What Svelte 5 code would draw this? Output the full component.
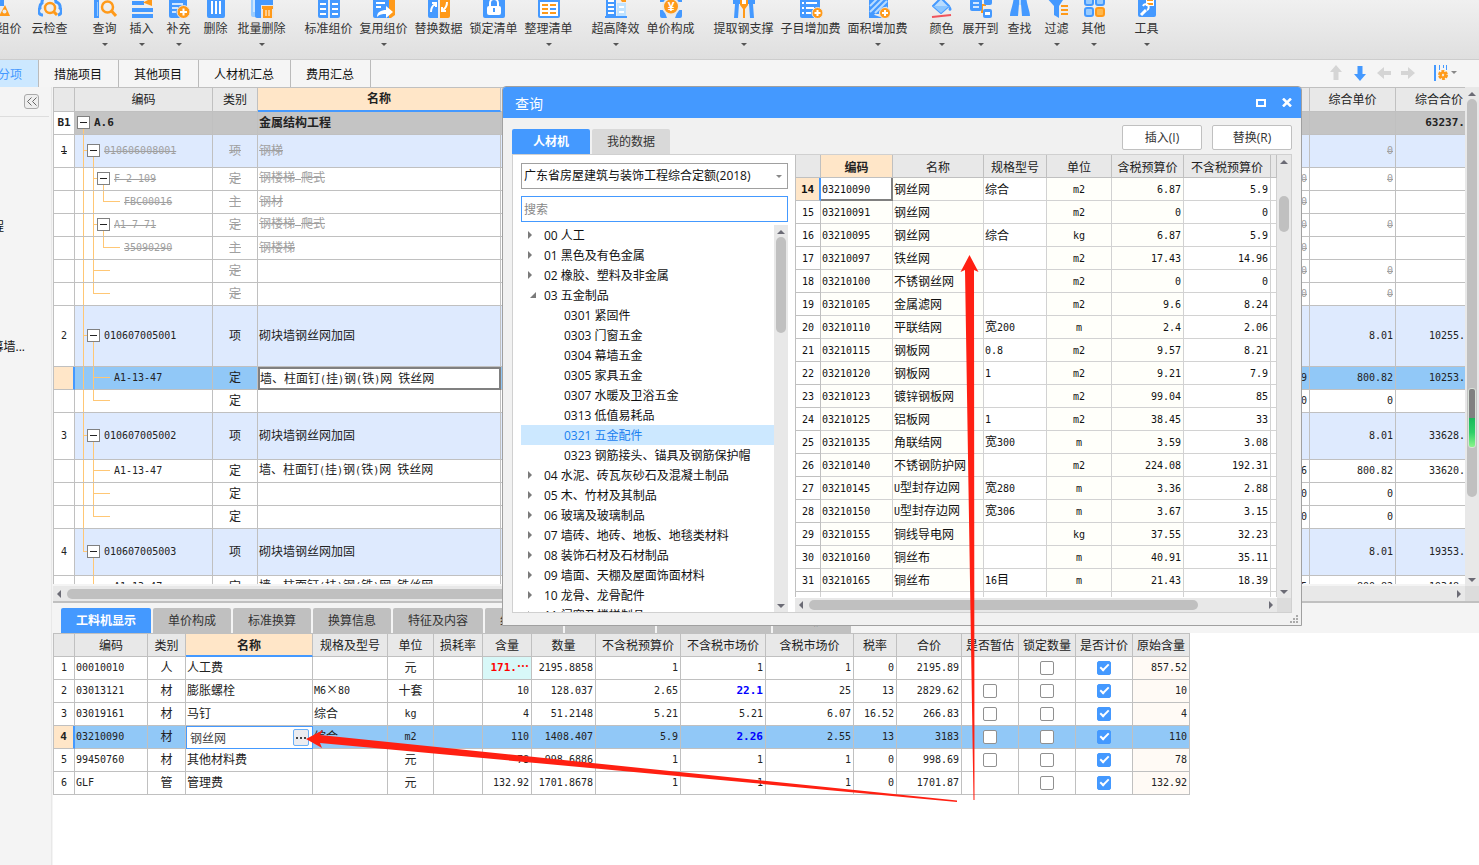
<script>
  // Ribbon icons are drawn on a 24x24 grid, blue #4499ff and orange #ff9a1a
  const icons = {
    smart:
      '<path d="M14 6h4v6h-4z" fill="#49f"/><path d="M19 11l5 11H13z" fill="#ff9a1a"/><circle cx="18.500" cy="17.500" r="2" fill="#eee"/>',
    cloud:
      '<path d="M5 21H4a4 4 0 0 1-2-7 5 5 0 0 1 2-5 7 7 0 0 1 14-1 5 5 0 0 1 4 6 4 4 0 0 1-2 7" fill="none" stroke="#49f" stroke-width="3"/><circle cx="12" cy="14" r="5" fill="none" stroke="#ff9a1a" stroke-width="2.500"/><path d="M16 18l3 3" stroke="#ff9a1a" stroke-width="3"/>',
    query:
      '<path d="M1 2h5v22H1z" fill="#49f"/><path d="M4 8h1v14H4z" fill="#9cf"/><path d="M8 2h12v4H8z" fill="#49f"/><circle cx="14.500" cy="13" r="5.500" fill="none" stroke="#ff9a1a" stroke-width="2.500"/><path d="M18.500 17l4.500 5" stroke="#ff9a1a" stroke-width="3"/>',
    insert:
      '<path d="M2 7h12v4H2zM2 14h21v4H2zM2 20h21v4H2z" fill="#49f"/><path d="M13 8.500L22 4v8z" fill="#ff9a1a"/>',
    add:
      '<path d="M2 2h18v22H4a2 2 0 0 1-2-2z" fill="#49f"/><path d="M5 10h11M5 14h6M5 18h4" stroke="#fff" stroke-width="1.500"/><circle cx="16.500" cy="18" r="6.500" fill="#ff9a1a" stroke="#e9e9e9" stroke-width="1"/><path d="M16.500 14.500v7M13 18h7" stroke="#fff" stroke-width="2"/>',
    remove:
      '<path d="M1 2h22v3H1zM3 6h18v16a2 2 0 0 1-2 2H5a2 2 0 0 1-2-2z" fill="#49f"/><path d="M8 7v13M12 7v13M16 7v13" stroke="#fff" stroke-width="2"/>',
    batch:
      '<path d="M1 3h15v20H3a2 2 0 0 1-2-2z" fill="#9cf"/><path d="M5 3h18v21H7a2 2 0 0 1-2-2z" fill="#49f"/><path d="M4 6v12" stroke="#cce6ff" stroke-width="2"/><path d="M11 11h13v14H11z" fill="#e8e8e8"/><path d="M12 12h11v3H12zM13 15h9v9h-9z" fill="#ff9a1a"/><path d="M16 16v6M19 16v6" stroke="#fff" stroke-width="1"/>',
    standard:
      '<path d="M1 2h10v22H3a2 2 0 0 1-2-2zM13 2h10v20a2 2 0 0 1-2 2h-8z" fill="#49f"/><path d="M3 10h6M3 15h6M3 20h6M15 10h6M15 15h6M15 20h6" stroke="#fff" stroke-width="2"/>',
    reuse:
      '<path d="M8 2h13a2 2 0 0 1 2 2v17l-4 3h-8z" fill="#ff9a1a"/><path d="M1 2h16v22H3a2 2 0 0 1-2-2z" fill="#49f"/><path d="M4 9h9M4 13h5" stroke="#fff" stroke-width="2"/><path d="M5 23c0-5 4-7 9-7v-4l7 6-7 6v-4c-4 0-6 0-9 3z" fill="#fff"/>',
    replace:
      '<path d="M1 4h10v20H3a2 2 0 0 1-2-2z" fill="#49f"/><path d="M13 4h10v18a2 2 0 0 1-2 2h-8z" fill="#ff9a1a"/><path d="M4 18c0-4 1-6 4-8M5 9h4v4M20 8c0 4-1 6-4 8M15 13v4h4" fill="none" stroke="#fff" stroke-width="2"/>',
    lock:
      '<rect x="1" y="2" width="22" height="22" rx="2" fill="#49f"/><path d="M8 13V9a4 4 0 0 1 8 0v4" fill="none" stroke="#fff" stroke-width="2"/><rect x="5" y="12" width="14" height="9" rx="2" fill="#fff"/><path d="M12 14v4" stroke="#49f" stroke-width="2"/>',
    arrange:
      '<rect x="2" y="2" width="20" height="21" rx="1" fill="#fff" stroke="#49f" stroke-width="2"/><path d="M3 3h18v5H3z" fill="#49f"/><path d="M5 11h6M5 15h6M5 19h6M13 11h6M13 15h6M13 19h6" stroke="#ff9a1a" stroke-width="2"/><path d="M13 15h6" stroke="#49f" stroke-width="2"/>',
    height:
      '<path d="M2 2h10v20H2z" fill="#49f"/><path d="M4 7h6M4 11h6M4 15h6M4 19h6" stroke="#fff" stroke-width="2"/><path d="M13 9h9v13h-9z" fill="#bfe2ff"/><path d="M15 13h5M15 18h5" stroke="#fff" stroke-width="2"/><path d="M1 22h22v2H1z" fill="#49f"/><path d="M14 2h8v6h-4z" fill="#ff9a1a"/>',
    price:
      '<path d="M1 3h22v5H1zM1 16h4l3 8H3a2 2 0 0 1-2-2zM23 16h-4l-3 8h5a2 2 0 0 0 2-2z" fill="#49f"/><circle cx="12" cy="12.500" r="8" fill="#ff9a1a" stroke="#e9e9e9" stroke-width="2"/><text x="12" y="17" font-size="12" font-weight="700" font-family="Liberation Sans, sans-serif" text-anchor="middle" fill="#fff">¥</text>',
    steel:
      '<path d="M1 6h22v4H1zM3 10h4l-1 14H2zM17 10h4l1 14h-4z" fill="#49f"/><path d="M8 4h8v7l-3 4v9h-2v-9l-3-4z" fill="#ff9a1a"/><path d="M10 6h4v4h-4z" fill="#fff"/>',
    subfee:
      '<path d="M1 2h20v22H3a2 2 0 0 1-2-2z" fill="#49f"/><path d="M3 9h2M3 14h2M3 19h2M7 9h11M7 14h8M7 19h5" stroke="#fff" stroke-width="2"/><circle cx="18.500" cy="19" r="5.500" fill="#ff9a1a" stroke="#e9e9e9" stroke-width="1"/><path d="M18.500 16v6M15.500 19h6" stroke="#fff" stroke-width="2"/>',
    areafee:
      '<path d="M3 2h19v18H3z" fill="#49f"/><path d="M4 12l9-9M4 18L19 3M9 19L21 7M14 20l7-7" stroke="#b8dcff" stroke-width="2"/><path d="M3 19v5h14M3 24l6-4H3z" fill="#49f"/><circle cx="19" cy="19" r="5.500" fill="#ff9a1a" stroke="#e9e9e9" stroke-width="1"/><path d="M19 16v6M16 19h6" stroke="#fff" stroke-width="2"/>',
    color:
      '<path d="M11 4l8 8-8 7-8-7z" fill="#b8dcff" stroke="#49f" stroke-width="2" stroke-linejoin="round"/><path d="M3 12h16l-8 7z" fill="#8cc6ff"/><path d="M20 12c2 3 2 4 0 5-2-1-2-2 0-5z" fill="#49f"/><path d="M2 23l19-2" stroke="#f0545c" stroke-width="2"/>',
    expand:
      '<path d="M13 11h4M17 18h-4v-7" fill="none" stroke="#ff9a1a" stroke-width="2"/><rect x="1" y="5" width="12" height="12" rx="2" fill="#49f"/><path d="M4 9h6M4 13h6" stroke="#fff" stroke-width="1.500"/><rect x="15" y="4" width="8" height="7" rx="2" fill="#49f"/><rect x="14" y="15" width="9" height="9" rx="2" fill="#49f"/><path d="M16 18h5v3h-5z" fill="#fff"/>',
    find:
      '<path d="M6 2h5v8l-1 12H2c0-5 3-10 4-20zM13 2h5c1 10 4 15 4 20h-8l-1-12z" fill="#49f"/><path d="M11 5h2v6h-2z" fill="#b8dcff"/>',
    filter:
      '<path d="M1 3h19l-6 9v12l-5-3v-9z" fill="#49f"/><path d="M16 12h7M16 16h7M16 20h7" stroke="#ff9a1a" stroke-width="2"/>',
    other:
      '<g fill="#9cf" stroke="#49f" stroke-width="2"><rect x="3" y="3" width="8" height="8" rx="2"/><rect x="14" y="3" width="8" height="8" rx="2"/><rect x="3" y="14" width="8" height="8" rx="2"/></g><rect x="14" y="14" width="8" height="8" rx="2" fill="#ffb84d" stroke="#ff9a1a" stroke-width="2"/>',
    tools:
      '<rect x="3" y="2" width="18" height="21" rx="2" fill="#49f"/><path d="M11 4h8v8h-8z" fill="#fff"/><path d="M12 6h6M12 10h6" stroke="#ff9a1a" stroke-width="2"/><path d="M6 21l5-5" stroke="#fff" stroke-width="3"/><path d="M8 12a3 3 0 1 1 4 4" fill="none" stroke="#fff" stroke-width="2"/>',
  };

  const ribbon = [
    { gap: "none", items: [["智能组价", "smart"]] },
    { gap: "small", items: [["云检查", "cloud"]] },
    {
      gap: "large",
      items: [
        ["查询", "query", true],
        ["插入", "insert", true],
        ["补充", "add", true],
        ["删除", "remove"],
        ["批量删除", "batch", true],
      ],
    },
    {
      gap: "medium",
      items: [
        ["标准组价", "standard"],
        ["复用组价", "reuse", true],
        ["替换数据", "replace"],
        ["锁定清单", "lock"],
        ["整理清单", "arrange", true],
      ],
    },
    {
      gap: "medium",
      items: [
        ["超高降效", "height", true],
        ["单价构成", "price"],
      ],
    },
    {
      gap: "medium",
      items: [
        ["提取钢支撑", "steel", true],
        ["子目增加费", "subfee"],
        ["面积增加费", "areafee", true],
      ],
    },
    {
      gap: "medium",
      items: [
        ["颜色", "color", true],
        ["展开到", "expand", true],
        ["查找", "find"],
        ["过滤", "filter", true],
        ["其他", "other", true],
      ],
    },
    { gap: "large", items: [["工具", "tools", true]] },
  ];

  const pages = ["分部分项", "措施项目", "其他项目", "人材机汇总", "费用汇总"];

  // depth: tree level, box: has children, last: last child, through: levels whose line runs past
  const bills = [
    { no: "B1", code: "A.6", kind: "", name: "金属结构工程", sum: "63237.", h: 23, tone: "root", depth: 0, box: true },
    { no: "1", code: "010606008001", kind: "项", name: "钢梯", price: "0", h: 33, tone: "item", depth: 1, box: true, dead: true },
    { code: "F-2-109", kind: "定", name: "钢楼梯 爬式", qty: "0", price: "0", h: 23, depth: 2, box: true, through: [0], dead: true },
    { code: "FBC00016", kind: "主", name: "钢材", qty: "0", h: 23, depth: 3, last: true, through: [0, 1], dead: true },
    { code: "A1-7-71", kind: "定", name: "钢楼梯 爬式", qty: "0", price: "0", h: 23, depth: 2, box: true, through: [0], dead: true },
    { code: "35090290", kind: "主", name: "钢楼梯", qty: "0", h: 23, depth: 3, last: true, through: [0, 1], dead: true },
    { code: "", kind: "定", name: "", qty: "0", price: "0", h: 23, depth: 2, through: [0], dead: true },
    { code: "", kind: "定", name: "", qty: "0", price: "0", h: 23, depth: 2, last: true, through: [0], dead: true },
    { no: "2", code: "010607005001", kind: "项", name: "砌块墙钢丝网加固", price: "8.01", sum: "10255.", h: 61, tone: "item", depth: 1, box: true },
    { code: "A1-13-47", kind: "定", name: "墙、柱面钉(挂)钢(铁)网 铁丝网", qty: "9", price: "800.82", sum: "10253.", h: 23, tone: "current", depth: 2, through: [0] },
    { code: "", kind: "定", name: "", qty: "0", price: "0", h: 23, depth: 2, last: true, through: [0] },
    { no: "3", code: "010607005002", kind: "项", name: "砌块墙钢丝网加固", price: "8.01", sum: "33628.", h: 47, tone: "item", depth: 1, box: true },
    { code: "A1-13-47", kind: "定", name: "墙、柱面钉(挂)钢(铁)网 铁丝网", qty: "6", price: "800.82", sum: "33620.", h: 23, depth: 2, through: [0] },
    { code: "", kind: "定", name: "", qty: "0", price: "0", h: 23, depth: 2, through: [0] },
    { code: "", kind: "定", name: "", qty: "0", price: "0", h: 23, depth: 2, last: true, through: [0] },
    { no: "4", code: "010607005003", kind: "项", name: "砌块墙钢丝网加固", price: "8.01", sum: "19353.", h: 47, tone: "item", depth: 1, box: true, last: true },
    { code: "A1-13-47", kind: "定", name: "墙、柱面钉(挂)钢(铁)网 铁丝网", qty: "5", price: "800.82", sum: "19348.", h: 23, depth: 2 },
  ];

  const details = ["工料机显示", "单价构成", "标准换算", "换算信息", "特征及内容", "组价方案", "工程量明细", "反查图形工程量", "说明信息"];

  const resourceCols = [
    ["", 21], ["编码", 73], ["类别", 38], ["名称", 127], ["规格及型号", 75], ["单位", 46],
    ["损耗率", 49], ["含量", 49], ["数量", 64], ["不含税预算价", 85], ["不含税市场价", 85],
    ["含税市场价", 88], ["税率", 43], ["合价", 65], ["是否暂估", 57], ["锁定数量", 57],
    ["是否计价", 57], ["原始含量", 57],
  ];

  const resources = [
    { code: "00010010", kind: "人", name: "人工费", spec: "", unit: "元", use: "171.⋯", qty: "2195.8858", budget: "1", market: "1", taxed: "1", rate: "0", total: "2195.89", origin: "857.52", warn: true },
    { code: "03013121", kind: "材", name: "膨胀螺栓", spec: "M6×80", unit: "十套", use: "10", qty: "128.037", budget: "2.65", market: "22.1", taxed: "25", rate: "13", total: "2829.62", origin: "10", est: true, changed: true },
    { code: "03019161", kind: "材", name: "马钉", spec: "综合", unit: "kg", use: "4", qty: "51.2148", budget: "5.21", market: "5.21", taxed: "6.07", rate: "16.52", total: "266.83", origin: "4", est: true },
    { code: "03210090", kind: "材", name: "钢丝网", spec: "综合", unit: "m2", use: "110", qty: "1408.407", budget: "5.9", market: "2.26", taxed: "2.55", rate: "13", total: "3183", origin: "110", est: true, changed: true, current: true },
    { code: "99450760", kind: "材", name: "其他材料费", spec: "", unit: "元", use: "78", qty: "998.6886", budget: "1", market: "1", taxed: "1", rate: "0", total: "998.69", origin: "78", est: true },
    { code: "GLF", kind: "管", name: "管理费", spec: "", unit: "元", use: "132.92", qty: "1701.8678", budget: "1", market: "1", taxed: "1", rate: "0", total: "1701.87", origin: "132.92" },
  ];

  const catalog = [
    ["00 人工"],
    ["01 黑色及有色金属"],
    ["02 橡胶、塑料及非金属"],
    ["03 五金制品", "open"],
    ["0301 紧固件", "leaf"],
    ["0303 门窗五金", "leaf"],
    ["0304 幕墙五金", "leaf"],
    ["0305 家具五金", "leaf"],
    ["0307 水暖及卫浴五金", "leaf"],
    ["0313 低值易耗品", "leaf"],
    ["0321 五金配件", "leaf"],
    ["0323 钢筋接头、锚具及钢筋保护帽", "leaf"],
    ["04 水泥、砖瓦灰砂石及混凝土制品"],
    ["05 木、竹材及其制品"],
    ["06 玻璃及玻璃制品"],
    ["07 墙砖、地砖、地板、地毯类材料"],
    ["08 装饰石材及石材制品"],
    ["09 墙面、天棚及屋面饰面材料"],
    ["10 龙骨、龙骨配件"],
    ["11 门窗及楼梯制品"],
  ];

  const materialCols = [
    ["", 25], ["编码", 72], ["名称", 91], ["规格型号", 63], ["单位", 65], ["含税预算价", 72], ["不含税预算价", 87],
  ];

  const materials = [
    ["03210090", "钢丝网", "综合", "m2", "6.87", "5.9"],
    ["03210091", "钢丝网", "", "m2", "0", "0"],
    ["03210095", "钢丝网", "综合", "kg", "6.87", "5.9"],
    ["03210097", "铁丝网", "", "m2", "17.43", "14.96"],
    ["03210100", "不锈钢丝网", "", "m2", "0", "0"],
    ["03210105", "金属滤网", "", "m2", "9.6", "8.24"],
    ["03210110", "平联结网", "宽200", "m", "2.4", "2.06"],
    ["03210115", "钢板网", "0.8", "m2", "9.57", "8.21"],
    ["03210120", "钢板网", "1", "m2", "9.21", "7.9"],
    ["03210123", "镀锌钢板网", "", "m2", "99.04", "85"],
    ["03210125", "铝板网", "1", "m2", "38.45", "33"],
    ["03210135", "角联结网", "宽300", "m", "3.59", "3.08"],
    ["03210140", "不锈钢防护网", "", "m2", "224.08", "192.31"],
    ["03210145", "U型封存边网", "宽280", "m", "3.36", "2.88"],
    ["03210150", "U型封存边网", "宽306", "m", "3.67", "3.15"],
    ["03210155", "铜线导电网", "", "kg", "37.55", "32.23"],
    ["03210160", "铜丝布", "", "m", "40.91", "35.11"],
    ["03210165", "铜丝布", "16目", "m", "21.43", "18.39"],
  ];

  // Latin runs are set in a half-width face beside the full-width characters
  function runs(text) {
    return (text || "").split(/([\x20-\x7e]+)/).filter((part) => part !== "");
  }

  // Connector lines of one tree row, x = 8 + 10 * level
  function guides(row) {
    const mid = Math.floor(row.h / 2);
    let d = "";
    for (const level of row.through || []) {
      d += `M${8 + 10 * level}.5 0V${row.h}`;
    }
    if (row.depth > 0) {
      const x = 8 + 10 * (row.depth - 1);
      d += `M${x}.5 0V${row.last ? mid : row.h}M${x} ${mid - 0.5}h${row.box ? 10 : 17}`;
    }
    if (row.box) {
      d += `M${8 + 10 * row.depth}.5 ${mid}V${row.h}`;
    }
    return d;
  }
</script>

{#snippet mixed(text)}
  {#each runs(text) as part}{#if /^[\x20-\x7e]/.test(part)}<span class="half">{part}</span>{:else}{part}{/if}{/each}
{/snippet}

{#snippet branch(row)}
  {@const mid = Math.floor(row.h / 2)}
  <svg width={19 + 10 * row.depth} height={row.h - 1}>
    <path d={guides(row)} fill="none" stroke="#ffc775" />
    {#if row.box}
      <rect x={2.5 + 10 * row.depth} y={mid - 6.5} width="12" height="12" fill="#fff" stroke="#808080" />
      <path d="M{5 + 10 * row.depth} {mid - 0.5}h7" stroke="#222" />
    {/if}
  </svg>
{/snippet}

<div class="app">
  <header class="ribbon">
    {#each ribbon as group}
      <div class="group {group.gap}">
        {#each group.items as [label, icon, menu]}
          <button class="tool chars-{label.length}">
            <svg width="24" height="24" viewBox="0 0 24 24">{@html icons[icon]}</svg>
            <span>{label}</span>
            {#if menu}<i class="caret"></i>{/if}
          </button>
        {/each}
      </div>
    {/each}
  </header>

  <nav class="pages">
    {#each pages as page, i}
      <button class:active={i === 0}>{page}</button>
    {/each}
    <div class="moves">
      <button aria-label="上移"><svg width="14" height="16"><path d="M7 0l6 7H9.500v8h-5V7H1z" fill="#d5d5d5" /></svg></button>
      <button aria-label="下移"><svg width="14" height="16"><path d="M7 16l6-7H9.500V1h-5v8H1z" fill="#49f" /></svg></button>
      <button aria-label="左移"><svg width="14" height="14"><path d="M0 7l7-6v4h7v4H7v4z" fill="#d5d5d5" /></svg></button>
      <button aria-label="右移"><svg width="14" height="14"><path d="M14 7L7 1v4H0v4h7v4z" fill="#d5d5d5" /></svg></button>
      <button class="columns" aria-label="列设置">
        <svg width="14" height="16">
          <path d="M1 0v16" stroke="#49f" stroke-width="2" />
          <path d="M5.500 0v5M9.500 0v3M12.500 0v5" stroke="#49f" />
          <circle cx="9" cy="10" r="3" fill="none" stroke="#ff9a1a" stroke-width="4" stroke-dasharray="2.200 0.940" />
          <circle cx="9" cy="10" r="2.500" fill="none" stroke="#ff9a1a" stroke-width="2" />
        </svg>
        <i class="caret light"></i>
      </button>
    </div>
  </nav>

  <div class="body">
    <aside class="side">
      <div class="side-head">
        <button aria-label="收起">
          <svg width="10" height="9"><path d="M4.500 0.500l-4 4 4 4M9.500 0.500l-4 4 4 4" fill="none" stroke="#666" /></svg>
        </button>
      </div>
      <p class="first">单位工程</p>
      <p class="second">幕墙...</p>
    </aside>

    <main>
      <section class="bills">
        <div class="grid-clip">
          <table>
            <colgroup>
              <col class="w-no" /><col class="w-code" /><col class="w-kind" /><col class="w-name" />
              <col /><col class="w-price" /><col class="w-sum" />
            </colgroup>
            <thead>
              <tr>
                <th></th><th>编码</th><th>类别</th><th class="sorted">名称</th><th></th><th>综合单价</th>
                <th class="cut">综合合价</th>
              </tr>
            </thead>
            <tbody>
              {#each bills as row}
                <tr class={row.tone} class:dead={row.dead} style="height: {row.h}px">
                  <td class="no">{@render mixed(row.no)}</td>
                  <td class="code">
                    <div>
                      {#if row.box}
                        <button class="twisty" aria-label="折叠">{@render branch(row)}</button>
                      {:else}
                        {@render branch(row)}
                      {/if}
                      <span class="text">{@render mixed(row.code)}</span>
                    </div>
                  </td>
                  <td class="mid">{row.kind}</td>
                  <td class="name">{@render mixed(row.name)}</td>
                  <td class="num">{@render mixed(row.qty)}</td>
                  <td class="num">{@render mixed(row.price)}</td>
                  <td class="num cut">{@render mixed(row.sum)}</td>
                </tr>
              {/each}
            </tbody>
          </table>
        </div>
        <div class="vbar tall"><i class="up"></i><b></b><i class="down"></i></div>
        <div class="hbar wide"><i class="left"></i><b></b><i class="right"></i></div>
        <div class="corner"></div>
        <div class="meter"></div>
      </section>

      <section class="resources">
        <div class="detail-tabs">
          {#each details as tab, i}
            <button class:active={i === 0}>{tab}</button>
          {/each}
        </div>
        <div class="sheet">
          <table>
            <colgroup>
              {#each resourceCols as [, width]}<col style="width: {width}px" />{/each}
            </colgroup>
            <thead>
              <tr>
                {#each resourceCols as [title]}<th class:sorted={title === "名称"}>{title}</th>{/each}
              </tr>
            </thead>
            <tbody>
              {#each resources as row, i}
                <tr class:current={row.current}>
                  <td class="no">{@render mixed(String(i + 1))}</td>
                  <td>{@render mixed(row.code)}</td>
                  <td class="mid">{row.kind}</td>
                  {#if row.current}
                    <td class="editing">
                      <div>
                        <input type="text" aria-label="名称" value={row.name} />
                        <button aria-label="查询"><i></i><i></i><i></i></button>
                      </div>
                    </td>
                  {:else}
                    <td>{row.name}</td>
                  {/if}
                  <td>{@render mixed(row.spec)}</td>
                  <td class="mid">{@render mixed(row.unit)}</td>
                  <td></td>
                  <td class="num" class:warn={row.warn}>{@render mixed(row.use)}</td>
                  <td class="num">{@render mixed(row.qty)}</td>
                  <td class="num">{@render mixed(row.budget)}</td>
                  <td class="num" class:changed={row.changed}>{@render mixed(row.market)}</td>
                  <td class="num">{@render mixed(row.taxed)}</td>
                  <td class="num">{@render mixed(row.rate)}</td>
                  <td class="num">{@render mixed(row.total)}</td>
                  <td class="check">{#if row.est}<input type="checkbox" aria-label="是否暂估" />{/if}</td>
                  <td class="check"><input type="checkbox" aria-label="锁定数量" /></td>
                  <td class="check"><input type="checkbox" aria-label="是否计价" checked /></td>
                  <td class="num origin">{@render mixed(row.origin)}</td>
                </tr>
              {/each}
            </tbody>
          </table>
        </div>
      </section>
    </main>
  </div>

  <div class="dialog" role="dialog" aria-label="查询">
    <div class="title">
      <h1>查询</h1>
      <button aria-label="最大化"><svg width="10" height="8"><rect x="1" y="1" width="8" height="6" fill="none" stroke="#fff" stroke-width="2" /></svg></button>
      <button aria-label="关闭"><svg width="10" height="9"><path d="M1 0.500l8 8M9 0.500l-8 8" stroke="#fff" stroke-width="2.500" /></svg></button>
    </div>
    <div class="dialog-head">
      <div class="dialog-tabs">
        <button class="active">人材机</button>
        <button>我的数据</button>
      </div>
      <button class="action">插入(I)</button>
      <button class="action">替换(R)</button>
    </div>
    <div class="pane">
      <div class="finder">
        <div class="choose">
          <select aria-label="定额库"><option>广东省房屋建筑与装饰工程综合定额(2018)</option></select>
          <i class="caret light"></i>
        </div>
        <input type="text" placeholder="搜索" aria-label="搜索" />
        <div class="catalog">
          <ul>
            {#each catalog as [label, state]}
              <li class={state} class:picked={label.startsWith("0321")}>
                {#if state === "open"}
                  <svg width="6" height="6"><path d="M8 0v6H2z" fill="#7a7a7a" /></svg>
                {:else if state !== "leaf"}
                  <svg width="5" height="8"><path d="M0 0l4 4-4 4z" fill="#7a7a7a" /></svg>
                {/if}
                <span>{label}</span>
              </li>
            {/each}
          </ul>
          <div class="vbar"><i class="up"></i><b></b><i class="down"></i></div>
        </div>
      </div>
      <div class="materials">
        <div class="grid-clip">
          <table>
            <colgroup>
              {#each materialCols as [, width]}<col style="width: {width}px" />{/each}
              <col />
            </colgroup>
            <thead>
              <tr>
                {#each materialCols as [title], i}<th class:sorted={i === 1}>{title}</th>{/each}
                <th></th>
              </tr>
            </thead>
            <tbody>
              {#each materials as row, i}
                <tr class:first={i === 0}>
                  <td class="no">{@render mixed(String(i + 14))}</td>
                  <td class="key">{@render mixed(row[0])}</td>
                  <td class="ivory">{@render mixed(row[1])}</td>
                  <td>{@render mixed(row[2])}</td>
                  <td class="mid ivory">{@render mixed(row[3])}</td>
                  <td class="num ivory">{@render mixed(row[4])}</td>
                  <td class="num">{@render mixed(row[5])}</td>
                  <td></td>
                </tr>
              {/each}
              <tr><td></td><td></td><td></td><td></td><td></td><td></td><td></td><td></td></tr>
            </tbody>
          </table>
        </div>
        <div class="vbar"><i class="up"></i><b></b><i class="down"></i></div>
        <div class="hbar"><i class="left"></i><b></b><i class="right"></i></div>
        <div class="corner"></div>
      </div>
    </div>
    <svg class="grip" width="8" height="8" fill="#aaa"><path d="M6 0h2v2H6zM3 3h2v2H3zM6 3h2v2H6zM0 6h2v2H0zM3 6h2v2H3zM6 6h2v2H6z" /></svg>
  </div>

  <svg class="marks" width="1000" height="820" fill="#ff2012">
    <path d="M969.500 255l9 17-4.500-2L974.500 800h-1L965 270l-4.500 2z" />
    <path d="M306 739l17-9-3 5 637 65.500v1.500L320 743l2 5z" />
  </svg>
</div>

<style>
  :global(body) {
    margin: 0;
  }
  .app {
    position: relative;
    display: flex;
    flex-direction: column;
    height: 100vh;
    overflow: hidden;
    background: #f4f4f4;
    color: #222;
    font: 12px/16px "Open Sans", "Noto Sans CJK SC", sans-serif;
  }
  button,
  input,
  select {
    margin: 0;
    padding: 0;
    border: 0;
    background: none;
    color: inherit;
    font: inherit;
  }
  svg {
    display: block;
    flex: none;
  }

  /* ribbon */
  .ribbon {
    display: flex;
    flex: none;
    height: 59px;
    overflow: hidden;
    border-bottom: 1px solid #cdcdcd;
    background: linear-gradient(#f0f0f0, #dfdfdf);
  }
  .group {
    display: flex;
    align-items: flex-start;
    margin-top: -6px;
  }
  .group.none {
    margin-left: -30px;
  }
  .group.small {
    margin-left: 4px;
  }
  .group.medium {
    margin-left: 12px;
  }
  .group.large {
    margin-left: 16px;
  }
  .tool {
    display: flex;
    flex-direction: column;
    align-items: center;
    color: #333;
    white-space: nowrap;
  }
  .tool span {
    margin-top: 2px;
    line-height: 18px;
  }
  .tool .caret {
    margin-top: 5px;
  }
  .chars-2 {
    width: 37px;
  }
  .chars-3 {
    width: 41px;
  }
  .chars-4 {
    width: 55px;
  }
  .chars-5 {
    width: 67px;
  }
  .caret {
    border: 3px solid transparent;
    border-top-color: #555;
    border-bottom: 0;
  }
  .caret.light {
    border-top-color: #888;
  }

  /* page tabs */
  .pages {
    display: flex;
    flex: none;
    height: 27px;
    margin-left: -41px;
    background: #f5f5f5;
    color: #111;
  }
  .pages > button {
    padding: 2px 16px 0 15px;
    border-right: 1px solid #bbb;
  }
  .pages > button.active {
    background: #cce8ff;
    color: #49f;
  }
  .moves {
    display: flex;
    align-items: center;
    gap: 10px;
    margin-left: auto;
    padding: 0 22px 2px 0;
  }
  .moves .columns {
    display: flex;
    align-items: center;
    gap: 3px;
    margin-left: 9px;
  }

  .body {
    display: flex;
    flex: 1;
    min-height: 0;
  }
  .side {
    flex: none;
    box-sizing: border-box;
    width: 52px;
    margin-right: 1px;
    overflow: hidden;
    border-right: 1px solid #e8e8e8;
  }
  .side-head {
    display: flex;
    justify-content: flex-end;
    height: 29px;
    margin-right: 2px;
    border-bottom: 1px solid #ddd;
  }
  .side-head button {
    display: grid;
    place-items: center;
    box-sizing: border-box;
    width: 15px;
    height: 15px;
    margin: 7px 10px 0 0;
    border: 1px solid #aaa;
    border-radius: 3px;
    background: #eee;
  }
  .side p {
    display: flex;
    justify-content: flex-end;
    margin: 0;
    color: #111;
    white-space: nowrap;
  }
  .side .first {
    width: 4px;
    margin-top: 102px;
  }
  .side .second {
    width: 25px;
    margin-top: 104px;
  }
  main {
    display: flex;
    flex: 1;
    flex-direction: column;
    min-width: 0;
  }

  /* shared grid look */
  table {
    width: 100%;
    table-layout: fixed;
    border-collapse: separate;
    border-spacing: 0;
    font-family: "Noto Sans CJK SC", sans-serif;
  }
  .half {
    font-family: "DejaVu Sans Mono", monospace;
    font-size: 10px;
    white-space: pre;
  }
  th,
  td {
    box-sizing: border-box;
    height: 23px;
    padding: 0 2px 0 1px;
    overflow: hidden;
    border-right: 1px solid #c0c0c0;
    border-bottom: 1px solid #c0c0c0;
    background: #fff;
    text-align: left;
    white-space: nowrap;
  }
  th {
    padding: 0;
    background: #e8e8e8;
    font-weight: 400;
    text-align: center;
  }
  th.sorted {
    background: #ffe6c8;
    font-weight: 700;
  }
  td.no,
  td.mid,
  td.check {
    padding: 0;
    text-align: center;
  }
  td.num {
    text-align: right;
  }
  .grid-clip {
    min-width: 0;
    min-height: 0;
    overflow: hidden;
  }
  tr.current td {
    background: #91c8f7;
  }
  tr.current td.no,
  tr.first td.no {
    border-right: 2px solid #49f;
    background: #ffe6c8;
    font-weight: 700;
  }
  .root .half,
  .warn .half,
  .changed .half,
  .current .no .half,
  .first .no .half {
    font-size: 11px;
  }

  /* scroll bars */
  .vbar,
  .hbar {
    display: flex;
    align-items: center;
    background: #e8e8e8;
  }
  .vbar {
    flex-direction: column;
  }
  .vbar b,
  .hbar b {
    border-radius: 5px;
    background: #c0c0c0;
  }
  .vbar b {
    width: 10px;
    margin-top: 3px;
  }
  .hbar b {
    height: 10px;
    margin-left: 6px;
  }
  .vbar i,
  .hbar i {
    border: 4px solid transparent;
  }
  .vbar .up {
    margin-top: 5px;
    border-top: 0;
    border-bottom-color: #6b6b75;
  }
  .vbar .down {
    margin: auto 0 4px;
    border-bottom: 0;
    border-top-color: #6b6b75;
  }
  .hbar .left {
    margin-left: 4px;
    border-left: 0;
    border-right-color: #6b6b75;
  }
  .hbar .right {
    margin: 0 4px 0 auto;
    border-right: 0;
    border-left-color: #6b6b75;
  }
  .corner {
    background: #dcdcdc;
  }

  /* bill of quantities */
  .bills {
    position: relative;
    display: grid;
    flex: 1;
    grid-template-columns: 1fr 14px;
    grid-template-rows: 1fr 15px;
    min-height: 0;
    border-bottom: 2px solid #c0c0c0;
  }
  .bills .grid-clip {
    margin-bottom: 2px;
    border-top: 1px solid #c0c0c0;
    border-left: 1px solid #c0c0c0;
  }
  .bills th {
    height: 24px;
    padding-bottom: 2px;
  }
  .bills td,
  .resources td,
  .code .text {
    padding-bottom: 2px;
  }
  .w-no {
    width: 21px;
  }
  .w-code {
    width: 138px;
  }
  .w-kind {
    width: 45px;
  }
  .w-name {
    width: 243px;
  }
  .w-price {
    width: 86px;
  }
  .w-sum {
    width: 69px;
  }
  .bills th.sorted,
  .resources th.sorted {
    border-bottom: 2px solid #49f;
  }
  .bills .cut {
    padding-right: 0;
    border-right: 0;
    text-align: right;
  }
  .bills th.cut {
    padding-right: 2px;
  }
  .bills td.code,
  .resources td.check {
    padding: 0;
  }
  .code div {
    display: flex;
    align-items: center;
  }
  .twisty {
    display: block;
    flex: none;
  }
  tr.root td {
    background: #c4c4c4;
    font-weight: 700;
  }
  tr.root td.no {
    background: #fff;
  }
  tr.item td:not(.no) {
    background: #deeafe;
  }
  tr.dead td {
    color: #a0a0a0;
    text-decoration: line-through;
  }
  tr.dead td.no {
    color: #222;
  }
  /* own box, so the strike sits at the height of the smaller digits */
  tr.dead .half {
    display: inline-block;
    text-decoration: line-through;
  }
  .bills tr.current td.name {
    padding: 0;
    border: 2px solid #808080;
    background: #fff;
  }
  .vbar.tall b {
    height: 398px;
  }
  .hbar.wide b {
    width: 900px;
  }
  .meter {
    position: absolute;
    top: 301px;
    right: 3px;
    box-sizing: border-box;
    width: 8px;
    height: 60px;
    border: 1px solid #d8e0d8;
    border-radius: 3px;
    background: linear-gradient(#808080 50%, #18b85a 50%, #2fcf68 75%, #8cf58c);
  }

  /* resources of the selected item */
  .resources {
    flex: none;
    height: 262px;
  }
  .detail-tabs {
    display: flex;
    gap: 2px;
    padding: 5px 8px 0;
  }
  .detail-tabs button {
    height: 25px;
    padding: 0 15px;
    border-radius: 2px 2px 0 0;
    background: #c0c0c0;
    color: #333;
  }
  .detail-tabs button.active {
    background: #49f;
    color: #fff;
    font-weight: 700;
  }
  .sheet {
    height: 100%;
    background: #fff;
  }
  .sheet table {
    width: 1137px;
    border-top: 1px solid #c0c0c0;
    border-left: 1px solid #c0c0c0;
  }
  td.warn {
    background: #d8f8f8;
    color: #f00;
    font-weight: 700;
  }
  tr td.changed {
    color: #00f;
    font-weight: 700;
  }
  td.origin {
    background: #fffaf5;
  }
  tr.current td.editing {
    padding: 0;
    border: 1px solid #49f;
    background: #fff;
  }
  .editing div {
    display: flex;
    align-items: center;
    padding: 0 3px 0 3px;
  }
  .editing input {
    flex: 1;
    min-width: 0;
    color: #444;
  }
  .editing button {
    display: flex;
    align-items: center;
    justify-content: center;
    gap: 2px;
    box-sizing: border-box;
    width: 16px;
    height: 17px;
    border: 1px solid #6aaef5;
    border-radius: 2px;
    background: #ececf0;
  }
  .editing i {
    width: 2px;
    height: 2px;
    background: #444;
  }
  input[type="checkbox"] {
    display: grid;
    place-items: center;
    box-sizing: border-box;
    width: 14px;
    height: 14px;
    margin: 0 auto;
    border: 1px solid #909090;
    border-radius: 2px;
    background: #fff;
    appearance: none;
  }
  input[type="checkbox"]:checked {
    border-color: #49f;
    background: #49f;
  }
  input[type="checkbox"]:checked::after {
    width: 7px;
    height: 3px;
    margin-bottom: 3px;
    border: solid #fff;
    border-width: 0 0 2px 2px;
    content: "";
    transform: rotate(-45deg);
  }

  /* query window */
  .dialog {
    position: absolute;
    top: 86px;
    left: 502px;
    display: flex;
    flex-direction: column;
    box-sizing: border-box;
    width: 800px;
    height: 540px;
    border: 1px solid #a0a0a0;
    border-radius: 4px 4px 0 0;
    background: #f1f1f1;
  }
  .title {
    display: flex;
    flex: none;
    align-items: center;
    gap: 16px;
    height: 31px;
    padding: 0 9px 0 12px;
    border-radius: 3px 3px 0 0;
    background: #49f;
    color: #fff;
  }
  h1 {
    margin: 0 auto 0 0;
    padding-top: 2px;
    font-size: 14px;
    font-weight: 400;
  }
  .dialog-head {
    display: flex;
    flex: none;
    gap: 10px;
    height: 36px;
    padding: 0 9px;
  }
  .dialog-tabs {
    display: flex;
    align-items: flex-end;
    gap: 2px;
    margin-right: auto;
  }
  .dialog-tabs button {
    width: 78px;
    height: 25px;
    border-radius: 2px 2px 0 0;
    background: #d9d9d9;
    color: #333;
  }
  .dialog-tabs .active {
    background: #49f;
    color: #fff;
    font-weight: 700;
  }
  .action {
    box-sizing: border-box;
    width: 80px;
    height: 25px;
    margin-top: 7px;
    border: 1px solid #c0c0c0;
    border-radius: 2px;
    background: #fff;
    color: #333;
  }
  .pane {
    display: flex;
    flex: 1;
    gap: 7px;
    min-height: 0;
    margin: 0 9px 12px;
    border: 1px solid #d0d0d0;
    background: #fff;
  }
  .finder {
    display: flex;
    flex: none;
    flex-direction: column;
    width: 267px;
    padding: 8px 0 0 8px;
    color: #111;
  }
  .choose {
    display: flex;
    align-items: center;
    box-sizing: border-box;
    height: 26px;
    margin-bottom: 7px;
    padding-right: 5px;
    border: 1px solid #a0a0a0;
  }
  select {
    flex: 1;
    min-width: 0;
    height: 22px;
    padding-left: 2px;
    appearance: none;
  }
  .finder input {
    box-sizing: border-box;
    height: 26px;
    padding: 0 2px;
    border: 1px solid #49f;
  }
  .finder input::placeholder {
    color: #888;
  }
  .catalog {
    display: flex;
    flex: 1;
    min-height: 0;
    margin-top: 3px;
  }
  ul {
    flex: 1;
    margin: 0;
    padding: 0;
    overflow: hidden;
    list-style: none;
  }
  li {
    display: flex;
    align-items: center;
    height: 20px;
    padding-left: 7px;
    line-height: 20px;
    white-space: nowrap;
  }
  li span {
    padding-top: 2px;
  }
  li svg {
    width: 16px;
  }
  li.leaf {
    padding-left: 43px;
  }
  li.picked {
    background: #cce8ff;
    color: #1a80f0;
  }
  .catalog .vbar,
  .materials .vbar {
    width: 14px;
  }
  .catalog .vbar b {
    height: 96px;
  }
  .materials {
    display: grid;
    flex: 1;
    grid-template-columns: 1fr 14px;
    grid-template-rows: 1fr 14px;
    min-width: 0;
  }
  .materials .grid-clip {
    margin-bottom: 1px;
    border-left: 1px solid #c0c0c0;
  }
  .materials th {
    padding-top: 1px;
  }
  .materials td {
    border-color: #d2d2d2;
    color: #111;
  }
  .materials td.no {
    border-color: #c0c0c0;
  }
  .materials .ivory,
  .materials .key {
    background: #fffffa;
  }
  .materials tr.first .no {
    border-right: 2px solid #49f;
  }
  .materials tr.first .key {
    border-right: 2px solid #808080;
    border-bottom: 2px solid #808080;
    background: #fff;
  }
  .materials .vbar b {
    height: 36px;
    margin-top: 32px;
  }
  .materials .hbar b {
    width: 389px;
  }
  .grip {
    align-self: flex-end;
    margin: -10px 3px 2px 0;
  }

  /* hand-drawn arrows on top of everything */
  .marks {
    position: absolute;
    top: 0;
    left: 0;
    pointer-events: none;
  }
</style>
